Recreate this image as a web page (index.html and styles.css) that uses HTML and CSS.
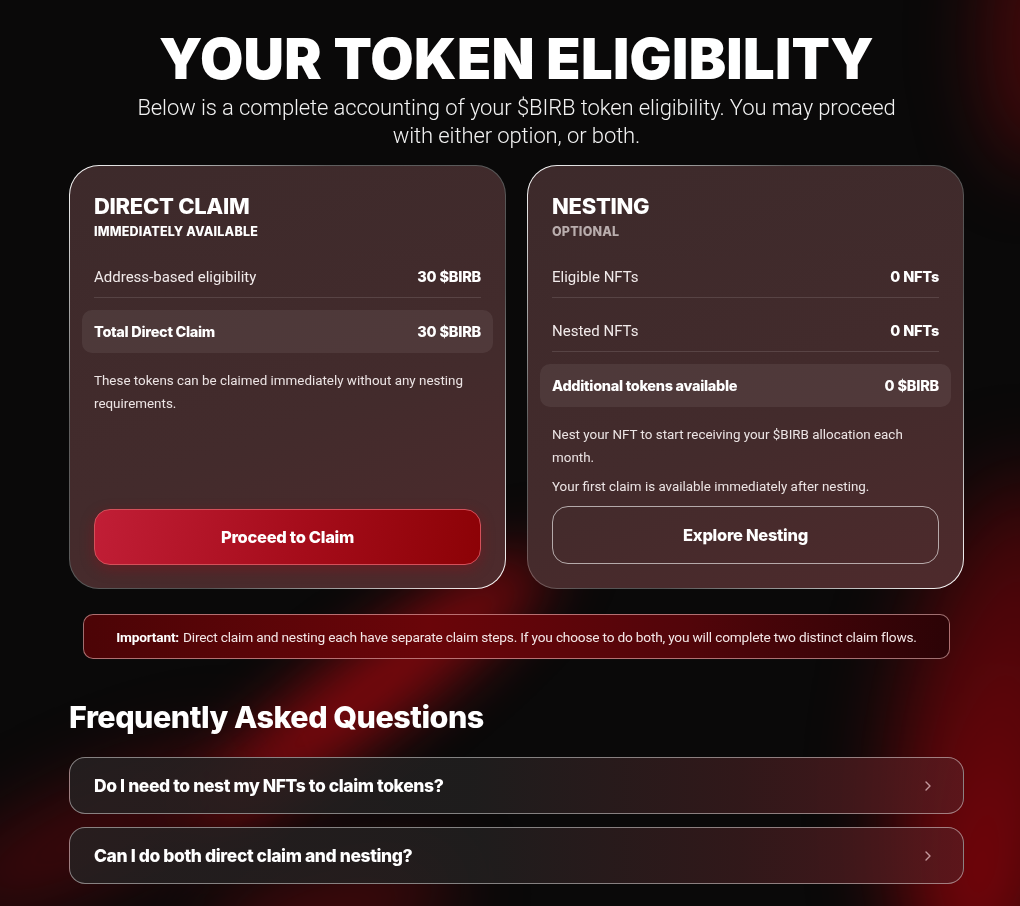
FILE: index.html
```html
<!DOCTYPE html>
<html lang="en">
<head>
<meta charset="utf-8">
<title>Your Token Eligibility</title>
<link rel="stylesheet" href="styles.css">
</head>
<body>
<div class="glow" aria-hidden="true">
  <span class="blob blob-streak"></span>
  <span class="blob blob-tail"></span>
  <span class="blob blob-low"></span>
  <span class="blob blob-right"></span>
  <span class="blob blob-top"></span>
</div>
<main class="page">
  <header class="hero">
    <h1 class="hero-title">YOUR TOKEN ELIGIBILITY</h1>
    <p class="hero-sub">Below is a complete accounting of your $BIRB token eligibility. You may proceed with either option, or both.</p>
  </header>

  <section class="cards">
    <article class="card">
      <h2 class="card-title">DIRECT CLAIM</h2>
      <div class="card-tag">IMMEDIATELY AVAILABLE</div>
      <div class="rows">
        <div class="row"><span>Address-based eligibility</span><b>30 $BIRB</b></div>
        <div class="row row-total"><span>Total Direct Claim</span><b>30 $BIRB</b></div>
      </div>
      <p class="note">These tokens can be claimed immediately without any nesting requirements.</p>
      <button class="btn btn-primary">Proceed to Claim</button>
    </article>

    <article class="card">
      <h2 class="card-title">NESTING</h2>
      <div class="card-tag card-tag-muted">OPTIONAL</div>
      <div class="rows">
        <div class="row"><span>Eligible NFTs</span><b>0 NFTs</b></div>
        <div class="row"><span>Nested NFTs</span><b>0 NFTs</b></div>
        <div class="row row-total"><span>Additional tokens available</span><b>0 $BIRB</b></div>
      </div>
      <p class="note">Nest your NFT to start receiving your $BIRB allocation each month.</p>
      <p class="note note-tight">Your first claim is available immediately after nesting.</p>
      <button class="btn btn-outline">Explore Nesting</button>
    </article>
  </section>

  <div class="notice"><strong>Important:</strong> Direct claim and nesting each have separate claim steps. If you choose to do both, you will complete two distinct claim flows.</div>

  <section class="faq">
    <h2 class="faq-title">Frequently Asked Questions</h2>
    <div class="faq-item"><span>Do I need to nest my NFTs to claim tokens?</span>
      <svg class="chev" width="10" height="14" viewBox="0 0 10 14"><path d="M3 3l4 4-4 4" fill="none" stroke="currentColor" stroke-width="1.4" stroke-linecap="round" stroke-linejoin="round"/></svg>
    </div>
    <div class="faq-item"><span>Can I do both direct claim and nesting?</span>
      <svg class="chev" width="10" height="14" viewBox="0 0 10 14"><path d="M3 3l4 4-4 4" fill="none" stroke="currentColor" stroke-width="1.4" stroke-linecap="round" stroke-linejoin="round"/></svg>
    </div>
  </section>
</main>
</body>
</html>
```

FILE: styles.css
```css
* { box-sizing: border-box; }
html, body { margin: 0; height: 100%; }
body {
  position: relative;
  background-color: #0a0909;
  color: #fff;
  font-family: Roboto, "Liberation Sans", sans-serif;
  overflow: hidden;
}
.glow {
  position: fixed;
  inset: 0;
  z-index: 0;
  overflow: hidden;
  pointer-events: none;
}
.blob {
  position: absolute;
  display: block;
  border-radius: 50%;
}
.blob-streak {
  left: 150px; top: 650px; width: 440px; height: 80px;
  transform: rotate(-37deg);
  background: rgba(150, 8, 14, 0.85);
  filter: blur(30px);
}
.blob-tail {
  left: -80px; top: 790px; width: 340px; height: 90px;
  transform: rotate(-25deg);
  background: rgba(110, 6, 12, 0.55);
  filter: blur(38px);
}
.blob-low {
  left: 200px; top: 870px; width: 260px; height: 80px;
  transform: rotate(-15deg);
  background: rgba(120, 8, 12, 0.55);
  filter: blur(36px);
}
.blob-right {
  left: 905px; top: 470px; width: 190px; height: 520px;
  transform: rotate(8deg);
  background: linear-gradient(180deg, rgba(110, 4, 10, 0.5), rgba(135, 4, 10, 0.95));
  filter: blur(42px);
}
.blob-top {
  left: 985px; top: -90px; width: 100px; height: 260px;
  background: rgba(105, 8, 12, 0.6);
  filter: blur(36px);
}
.page {
  position: relative;
  z-index: 1;
  width: 895px;
  margin-left: 69px;
  padding-top: 24px;
}
.hero { text-align: center; }
.hero-title {
  margin: 0;
  font-family: Inter, Roboto, sans-serif;
  font-weight: 900;
  font-size: 56px;
  line-height: 70px;
  letter-spacing: 0.3px;
}
.hero-sub {
  margin: 0 auto;
  width: 800px;
  font-weight: 300;
  font-size: 22px;
  line-height: 28px;
  letter-spacing: -0.1px;
  color: #f2f2f2;
}
.cards {
  display: grid;
  grid-template-columns: 437px 437px;
  gap: 21px;
  margin-top: 15px;
}
.card {
  display: flex;
  flex-direction: column;
  height: 424px;
  padding: 26px 24px 23px;
  border-radius: 30px;
  border: 1.5px solid transparent;
  background:
    linear-gradient(160deg, #3d2a2b 0%, #432b2c 60%, #4e2a2c 100%) padding-box,
    linear-gradient(135deg, #ffffff 0%, rgba(255,255,255,0.35) 30%, rgba(255,255,255,0.3) 65%, #ffffff 100%) border-box;
}
.card-title {
  margin: 0;
  font-family: Inter, Roboto, sans-serif;
  font-weight: 800;
  font-size: 22px;
  line-height: 28px;
  letter-spacing: -0.3px;
}
.card-tag {
  margin-top: 4px;
  font-family: Inter, Roboto, sans-serif;
  font-weight: 800;
  font-size: 12.5px;
  line-height: 16px;
  letter-spacing: 0.2px;
}
.card-tag-muted { color: #b9adad; }
.rows {
  display: flex;
  flex-direction: column;
  gap: 12px;
  margin-top: 16px;
}
.row {
  display: flex;
  justify-content: space-between;
  align-items: center;
  height: 42px;
  font-size: 15px;
  border-bottom: 1px solid rgba(255,255,255,0.12);
  color: #f1eaea;
}
.row b {
  font-family: Inter, Roboto, sans-serif;
  font-weight: 800;
  font-size: 14.5px;
  letter-spacing: -0.2px;
  color: #fff;
}
.row-total {
  height: 43px;
  margin: 0 -12px;
  padding: 0 12px;
  border-bottom: 0;
  border-radius: 10px;
  background: rgba(255,255,255,0.07);
}
.row-total span {
  font-family: Inter, Roboto, sans-serif;
  font-weight: 800;
  font-size: 14.5px;
  letter-spacing: -0.3px;
  color: #fff;
}
.note {
  margin: 16px 0 0;
  font-size: 13.4px;
  line-height: 23px;
  color: #ece4e4;
  letter-spacing: 0;
}
.note-tight { margin-top: 6px; }
.btn {
  flex-shrink: 0;
  margin-top: auto;
  width: 100%;
  height: 56px;
  border-radius: 16px;
  font-family: Inter, Roboto, sans-serif;
  font-weight: 800;
  font-size: 16.5px;
  letter-spacing: -0.3px;
  color: #fff;
  cursor: pointer;
}
.btn-primary {
  border: 1.5px solid #d4505a;
  background: linear-gradient(100deg, #c11e36 0%, #a50c1a 55%, #8c0206 100%);
  box-shadow: 0 4px 14px rgba(160,10,20,0.35);
}
.btn-outline {
  margin-top: 8px;
  height: 58px;
  border: 1.5px solid rgba(255,255,255,0.6);
  background: transparent;
}
.notice {
  margin: 25px 14px 0;
  height: 45px;
  display: flex;
  align-items: center;
  justify-content: center;
  border-radius: 10px;
  border: 1px solid rgba(255,200,200,0.55);
  background: linear-gradient(90deg, #4c0406 0%, #6a0509 40%, #52050a 70%, #2c0306 100%);
  font-size: 13.7px;
  letter-spacing: -0.2px;
  color: #f3e6e6;
}
.notice strong { font-weight: 700; margin-right: 4px; color: #fff; }
.faq { margin-top: 40px; }
.faq-title {
  margin: 0 0 22px;
  font-family: Inter, Roboto, sans-serif;
  font-weight: 800;
  font-size: 30.5px;
  line-height: 36px;
  letter-spacing: -0.5px;
}
.faq-item {
  display: flex;
  align-items: center;
  justify-content: space-between;
  height: 57px;
  margin-bottom: 13px;
  padding: 0 30px 0 24px;
  border-radius: 16px;
  border: 1.5px solid rgba(255,255,255,0.45);
  background: linear-gradient(90deg, rgba(38,33,34,0.85) 0%, rgba(34,32,32,0.85) 45%, rgba(58,28,30,0.82) 75%, rgba(90,26,31,0.82) 100%);
  font-family: Inter, Roboto, sans-serif;
  font-weight: 800;
  font-size: 17.5px;
  letter-spacing: -0.4px;
}
.chev { color: #c49a9e; }
```
